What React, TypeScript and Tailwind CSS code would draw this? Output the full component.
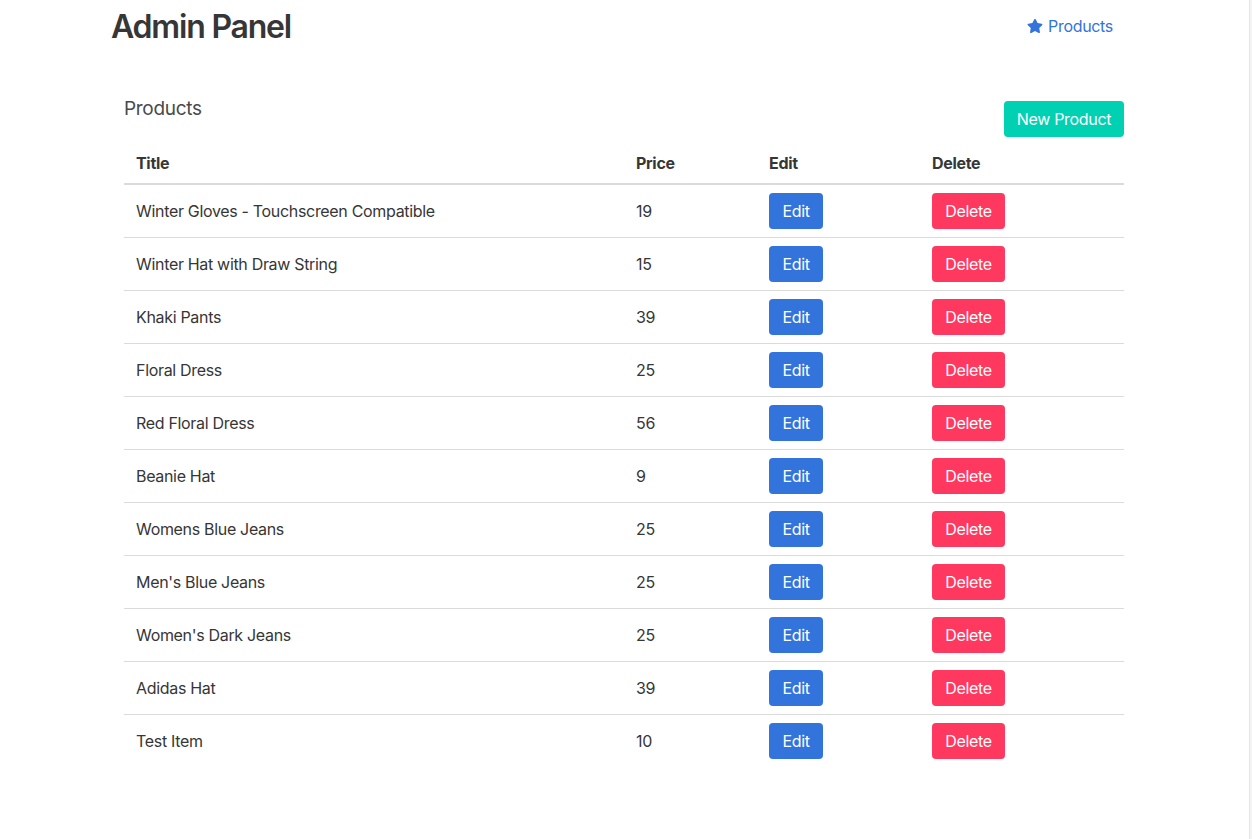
import React from 'react';
import { FaStar } from 'react-icons/fa';

interface Product {
  title: string;
  price: number;
}

const PRODUCTS: Product[] = [
  { title: 'Winter Gloves - Touchscreen Compatible', price: 19 },
  { title: 'Winter Hat with Draw String', price: 15 },
  { title: 'Khaki Pants', price: 39 },
  { title: 'Floral Dress', price: 25 },
  { title: 'Red Floral Dress', price: 56 },
  { title: 'Beanie Hat', price: 9 },
  { title: 'Womens Blue Jeans', price: 25 },
  { title: "Men's Blue Jeans", price: 25 },
  { title: "Women's Dark Jeans", price: 25 },
  { title: 'Adidas Hat', price: 39 },
  { title: 'Test Item', price: 10 },
];

const ProductRow: React.FC<{ product: Product; last: boolean }> = ({ product, last }) => (
  <tr className={last ? '' : 'border-b border-[#dbdbdb]'}>
    <td className="px-3 py-2 align-middle">{product.title}</td>
    <td className="px-3 py-2 align-middle">{product.price}</td>
    <td className="px-3 py-2 align-middle">
      <button className="h-9 w-[54px] rounded-[4px] bg-[#3273dc] text-white leading-none">Edit</button>
    </td>
    <td className="px-3 py-2 align-middle">
      <button className="h-9 w-[73px] rounded-[4px] bg-[#ff3860] text-white leading-none">Delete</button>
    </td>
  </tr>
);

export default function App() {
  return (
    <div
      className="flex min-h-[839px] bg-white text-[#363636] text-base tracking-[-0.02em]"
      style={{ fontFamily: 'Inter, "Noto Sans", sans-serif' }}
    >
      <div className="w-[1249px] shrink-0">
        {/* header */}
        <div className="flex items-center justify-between pl-[111px] pr-[136px] h-[54px]">
          <h1 className="text-[32px] font-semibold leading-10 text-[#363636] tracking-[-1.2px]">Admin Panel</h1>
          <a href="#" className="flex items-center gap-[5px] text-[#3273dc] -mt-[2px]">
            <FaStar size={16} />
            <span>Products</span>
          </a>
        </div>

        <div className="w-[1000px] ml-[124px] mt-[42px]">
          <div className="flex justify-between items-start">
            <h2 className="text-[19px] text-[#4a4a4a] leading-[25px]">Products</h2>
            <button className="mt-[5px] h-9 w-[120px] rounded-[4px] bg-[#00d1b2] text-white leading-none">
              New Product
            </button>
          </div>

          <table className="w-full mt-[6px] border-collapse">
            <colgroup>
              <col className="w-[500px]" />
              <col className="w-[133px]" />
              <col className="w-[163px]" />
              <col className="w-[204px]" />
            </colgroup>
            <thead>
              <tr className="border-b-2 border-[#dbdbdb] text-left">
                <th className="px-3 py-2 font-bold leading-6">Title</th>
                <th className="px-3 py-2 font-bold leading-6">Price</th>
                <th className="px-3 py-2 font-bold leading-6">Edit</th>
                <th className="px-3 py-2 font-bold leading-6">Delete</th>
              </tr>
            </thead>
            <tbody>
              {PRODUCTS.map((p, i) => (
                <ProductRow key={p.title} product={p} last={i === PRODUCTS.length - 1} />
              ))}
            </tbody>
          </table>
        </div>
      </div>
      <div className="w-[3px] border-l border-[#e4e4e4] bg-[#f4f4f4]" />
    </div>
  );
}
